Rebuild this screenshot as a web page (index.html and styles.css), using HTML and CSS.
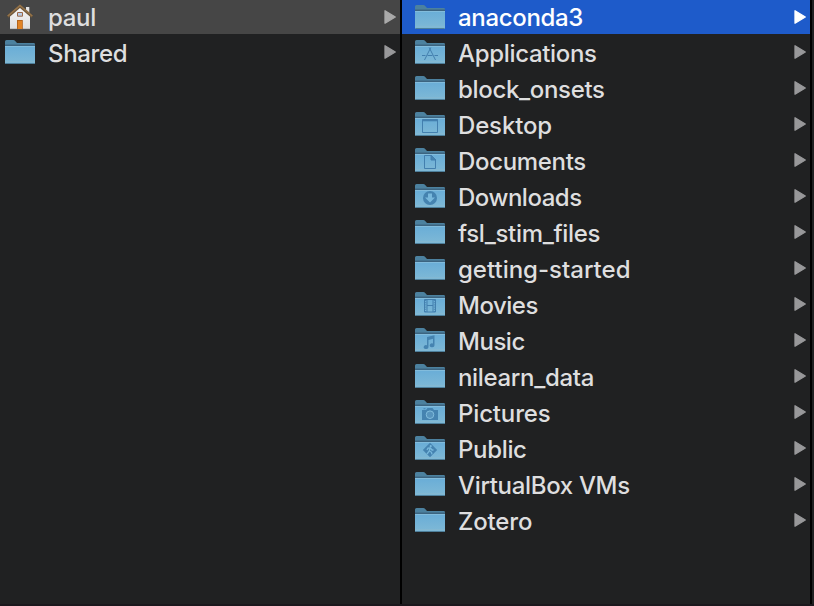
FILE: index.html
```
<!DOCTYPE html>
<html lang="en">
<head>
<meta charset="utf-8">
<title>Users</title>
<link rel="stylesheet" href="styles.css">
</head>
<body>
<svg class="defs" aria-hidden="true">
  <defs>
    <linearGradient id="face" x1="0" y1="0" x2="0" y2="1">
      <stop offset="0" stop-color="#69add7"/><stop offset="1" stop-color="#7fb9d6"/>
    </linearGradient>
    <linearGradient id="wall" x1="0" y1="0" x2="0" y2="1">
      <stop offset="0" stop-color="#f7f7f7"/><stop offset="1" stop-color="#dedede"/>
    </linearGradient>
    <symbol id="folder" viewBox="0 0 30 24">
      <path d="M0 23V1.5Q0 0 1.5 0H8.3Q9.4 0 10.2 1L12 3H28.7Q30 3 30 4.3V23Z" fill="#4c819f"/>
      <path d="M0 4.5H30V7H0Z" fill="#3c6480"/>
      <path d="M0 6H30V22.8Q30 24 28.8 24H1.2Q0 24 0 22.8Z" fill="url(#face)"/>
      <path d="M0 6.5H30" stroke="#82bcdc"/>
      <path d="M0 21.5H30" stroke="#83b8d2"/>
      <path d="M.5 23.5H29.5" stroke="#4e7f9b"/>
    </symbol>
    <symbol id="arrow" viewBox="0 0 12 14">
      <path d="M1 .8V13.2L11.3 7Z" fill="currentColor" stroke="currentColor" stroke-width="1.3" stroke-linejoin="round"/>
    </symbol>
  </defs>
</svg>
<main class="browser">
  <ul class="column users">
    <li class="row active">
      <svg class="icon home" viewBox="0 0 30 26">
        <path d="M21 3H24.3V10L21 7Z" fill="#e4e4e4"/>
        <path d="M5 11.5L15 2.5L25 11.5V25H5Z" fill="url(#wall)"/>
        <path d="M5 24.7H25" stroke="#aaa" stroke-width=".7"/>
        <path d="M2.8 12.8L15 2.3L27.2 12.8" fill="none" stroke="#6d563a" stroke-width="2.6"/>
        <path d="M2.8 12L15 1.5L27.2 12" fill="none" stroke="#967449" stroke-width="1.6"/>
        <path d="M12.5 8.5H17.5V12.2H12.5Z" fill="#b9cce3" stroke="#9a6848"/>
        <path d="M12 16H17.8V25H12Z" fill="#b4641b"/>
        <path d="M13 17H17V25H13Z" fill="#e18426"/>
      </svg>
      <span class="name">paul</span><svg class="arrow"><use href="#arrow"/></svg>
    </li>
    <li class="row"><svg class="icon"><use href="#folder"/></svg><span class="name">Shared</span><svg class="arrow"><use href="#arrow"/></svg></li>
  </ul>
  <ul class="column files">
    <li class="row selected"><svg class="icon"><use href="#folder"/></svg><span class="name">anaconda3</span><svg class="arrow"><use href="#arrow"/></svg></li>
    <li class="row"><svg class="icon" viewBox="0 0 30 24"><use href="#folder"/><g class="emblem"><path d="M9.5 20L15.8 7.5M14.2 7.5L20.5 20M7 15.5H10.5M12.5 15.5H17.5M19.5 15.5H23"/></g></svg><span class="name">Applications</span><svg class="arrow"><use href="#arrow"/></svg></li>
    <li class="row"><svg class="icon"><use href="#folder"/></svg><span class="name">block_onsets</span><svg class="arrow"><use href="#arrow"/></svg></li>
    <li class="row"><svg class="icon" viewBox="0 0 30 24"><use href="#folder"/><g class="emblem"><path d="M7.5 7.5H22.5V20.5H7.5Z"/><path d="M7.5 8.3H22.5" stroke-width="2"/></g></svg><span class="name loose">Desktop</span><svg class="arrow"><use href="#arrow"/></svg></li>
    <li class="row"><svg class="icon" viewBox="0 0 30 24"><use href="#folder"/><g class="emblem"><path d="M9.5 7.5H16.5L20.5 11.5V20.5H9.5Z"/><path class="solid" d="M16 7V12H21Z"/></g></svg><span class="name">Documents</span><svg class="arrow"><use href="#arrow"/></svg></li>
    <li class="row"><svg class="icon" viewBox="0 0 30 24"><use href="#folder"/><circle class="solid" cx="15" cy="14" r="7"/><path class="cut" d="M13 9.5H17V13.5H20L15 18.6L10 13.5H13Z"/></svg><span class="name tight">Downloads</span><svg class="arrow"><use href="#arrow"/></svg></li>
    <li class="row"><svg class="icon"><use href="#folder"/></svg><span class="name">fsl_stim_files</span><svg class="arrow"><use href="#arrow"/></svg></li>
    <li class="row"><svg class="icon"><use href="#folder"/></svg><span class="name natural">getting-started</span><svg class="arrow"><use href="#arrow"/></svg></li>
    <li class="row"><svg class="icon" viewBox="0 0 30 24"><use href="#folder"/><g class="emblem"><path d="M9.5 7.5H20.5V20H9.5ZM12 7.5V20M18 7.5V20M12 13.5H18"/><path d="M10.7 8V20M19.3 8V20" stroke-dasharray="1 1.2"/></g></svg><span class="name tight">Movies</span><svg class="arrow"><use href="#arrow"/></svg></li>
    <li class="row"><svg class="icon" viewBox="0 0 30 24"><use href="#folder"/><path class="solid" d="M12 9L19.5 7.3V17.3A2.4 2 0 1 1 18 15.5V10.8L13.5 11.9V19A2.4 2 0 1 1 12 17.2Z"/></svg><span class="name tight">Music</span><svg class="arrow"><use href="#arrow"/></svg></li>
    <li class="row"><svg class="icon"><use href="#folder"/></svg><span class="name">nilearn_data</span><svg class="arrow"><use href="#arrow"/></svg></li>
    <li class="row"><svg class="icon" viewBox="0 0 30 24"><use href="#folder"/><path class="solid" d="M7 10H11L12.5 8H17.5L19 10H23V20H7ZM8.5 8.3H10.5V9.3H8.5Z"/><circle class="ring" cx="15" cy="14.7" r="3.8"/></svg><span class="name loose">Pictures</span><svg class="arrow"><use href="#arrow"/></svg></li>
    <li class="row"><svg class="icon" viewBox="0 0 30 24"><use href="#folder"/><path class="solid" d="M15 6.8L22.2 14L15 21.2L7.8 14Z"/><circle class="cut" cx="15.7" cy="10.2" r="1.1"/><path class="walk" d="M12 14L13 12.2L15.4 12L17 14H18.5M15 12.2L14.3 15L12 18M14.6 15L16.5 16.3L17 18.3"/></svg><span class="name">Public</span><svg class="arrow"><use href="#arrow"/></svg></li>
    <li class="row"><svg class="icon"><use href="#folder"/></svg><span class="name">VirtualBox VMs</span><svg class="arrow"><use href="#arrow"/></svg></li>
    <li class="row"><svg class="icon"><use href="#folder"/></svg><span class="name loose">Zotero</span><svg class="arrow"><use href="#arrow"/></svg></li>
  </ul>
</main>
</body>
</html>
```
FILE: styles.css
```
* { box-sizing: border-box; }
body { margin: 0; background: #202122; overflow: hidden; }
.defs { position: absolute; width: 0; height: 0; }
.browser { display: flex; width: 814px; height: 606px; border-bottom: 2px solid #1b181d; }
.column { list-style: none; margin: 0; padding: 0; height: 604px; border-right: 2px solid #000; }
.users { width: 402px; }
.files { width: 410px; }
.row { display: flex; align-items: center; height: 36px; padding-right: 4px; color: #dededf; font: 500 24px/34px Inter, "Liberation Sans", sans-serif; }
.row:first-child { height: 34px; }
.users .row { padding-left: 5px; }
.files .row { padding-left: 13px; }
.active { background: #464646; }
.selected { background: #1e5bca; color: #fff; }
.icon { width: 30px; height: 24px; flex: none; }
.home { height: 26px; }
.name { flex: 1; margin-left: 13px; padding-top: 3px; letter-spacing: -0.33px; white-space: nowrap; }
.row:first-child .name { padding-top: 1px; }
.loose { letter-spacing: -0.15px; }
.tight { letter-spacing: -0.48px; }
.natural { letter-spacing: 0; }
.arrow { width: 12px; height: 14px; flex: none; color: #98989a; }
.active .arrow { color: #aaa; }
.selected .arrow { color: #fff; }
.emblem { fill: none; stroke: #437fae; stroke-width: 1; }
.solid { fill: #4583b0; }
.cut { fill: #78b8dc; }
.ring { fill: #5794bd; stroke: #82bddd; stroke-width: 1; }
.walk { fill: none; stroke: #78b8dc; stroke-width: 1.3; }
```
